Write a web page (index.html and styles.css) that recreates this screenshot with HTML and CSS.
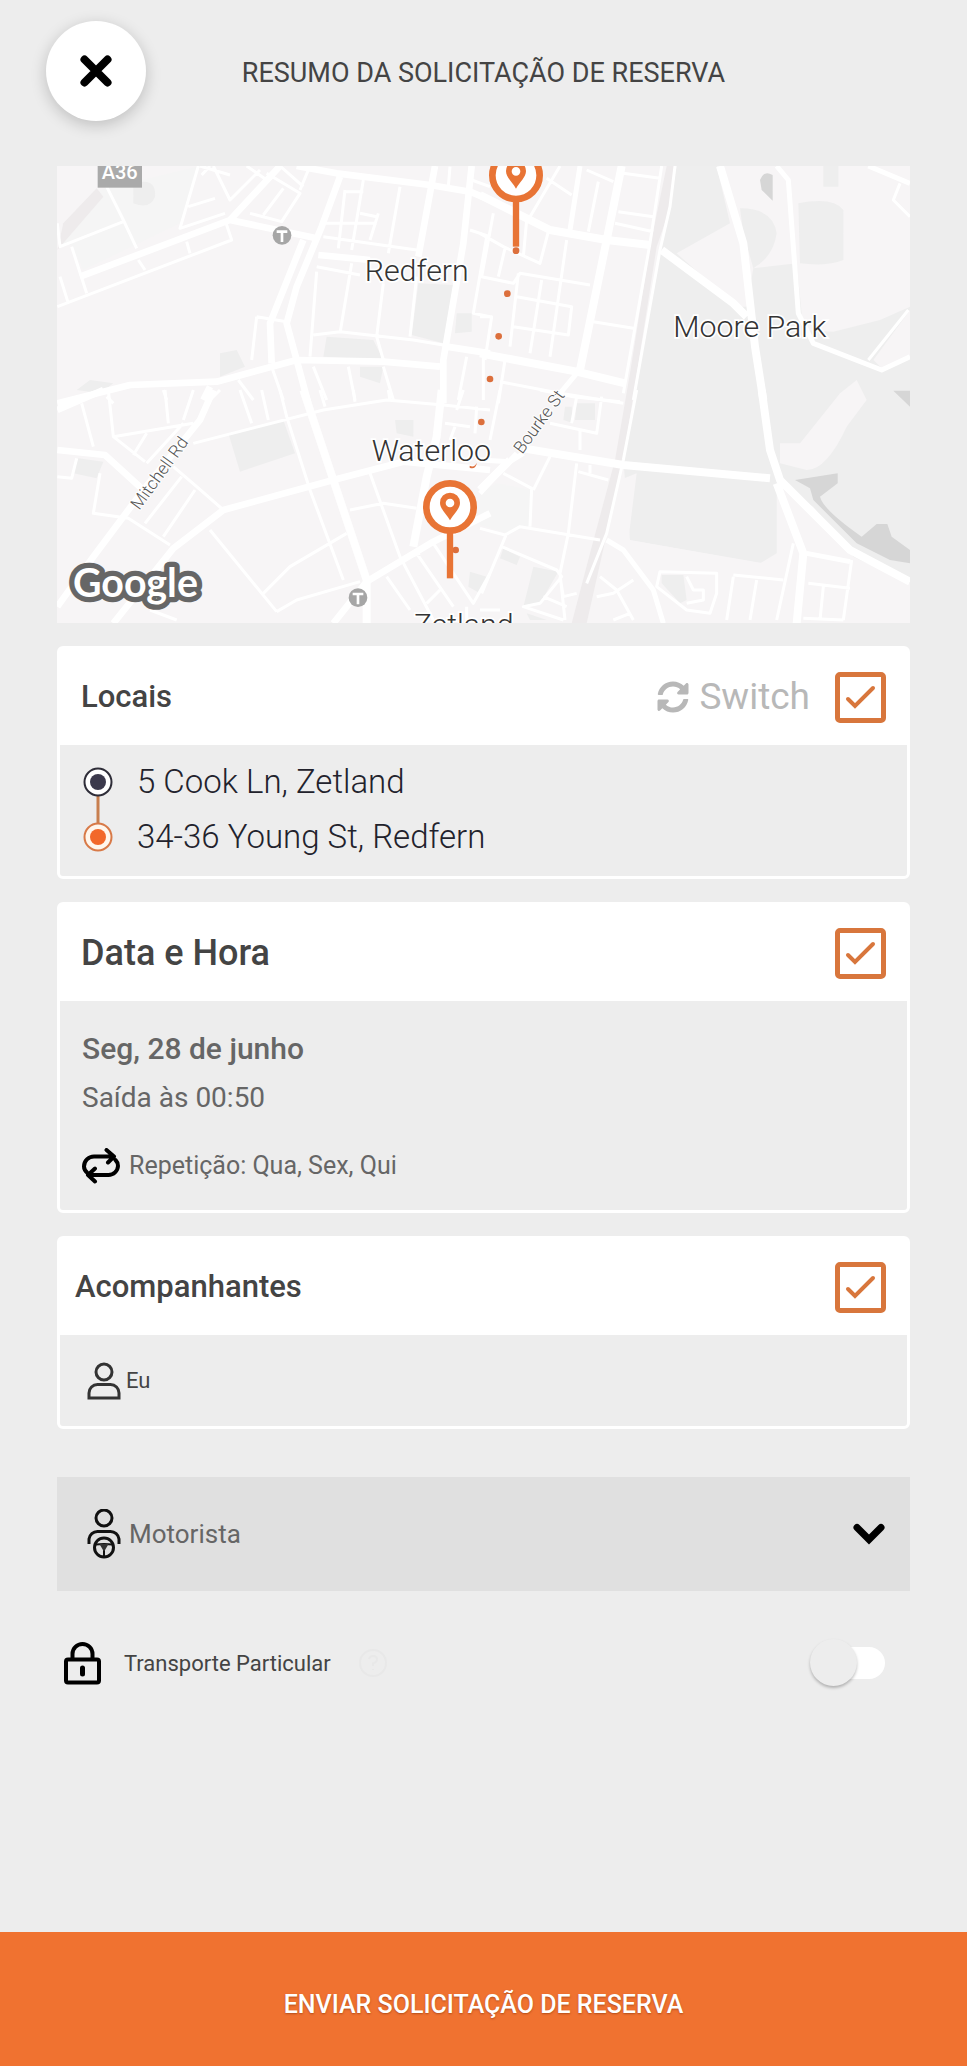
FILE: index.html
```html
<!DOCTYPE html>
<html lang="pt-BR">
<head>
<meta charset="utf-8">
<meta name="viewport" content="width=device-width, initial-scale=1">
<title>Resumo da solicitação de reserva</title>
<link rel="stylesheet" href="styles.css">
</head>
<body class="page">
<header class="topbar">
  <button class="close" type="button" aria-label="Fechar">
    <svg width="32" height="32" viewBox="0 0 32 32"><path d="M4.500 4.500L27.500 27.500M27.500 4.500L4.500 27.500"/></svg>
  </button>
  <h1 class="topbar-title">RESUMO DA SOLICITAÇÃO DE RESERVA</h1>
</header>

<main class="content">
  <svg class="map" viewBox="0 0 2559 1371" role="img" aria-label="Mapa do trajeto entre Zetland e Redfern">
    <rect class="land" width="2559" height="1371"/>
    <!-- Parks and water -->
    <g transform="translate(-21 -18)">
      <path class="green" d="M150 90L450 18L390 190L100 330L65 255L40 250Z"/>
      <path class="park" d="M1105 370L1210 375L1180 550L1085 525ZM830 530L970 540L1000 600L820 590ZM510 580L560 570L585 620L510 650ZM80 690L120 660L190 670L150 700ZM1220 460H1265V515L1215 520ZM930 620H1000L990 670L930 650ZM250 70Q320 50 315 110Q300 150 250 130Z"/>
      <path class="rail" d="M140 85L40 190L22 270L160 110Z"/>
    </g>
    <g transform="translate(1269 -18)">
      <path class="park" d="M590 18H1290V1390H1100L890 930L890 1180L840 1210L450 1140L430 900L460 720L540 280Z"/>
      <path class="land" d="M710 18H1290V440L1200 480L1060 515L970 510L950 310L820 325L800 440L770 440L590 280L750 190Z"/>
      <path class="park" d="M780 145Q880 145 890 220Q880 290 820 325L790 220ZM955 130Q1060 110 1090 150V300Q1040 320 960 310ZM1030 18H1075V80H1030Z"/>
      <path class="land" d="M1290 450L1180 600L1210 630L1290 590ZM1130 660L1160 720L1100 800Q1040 930 980 930L900 910V850H960L1080 700ZM900 980L1000 1040L1120 1190L1290 1270V1390H950Z"/>
      <path class="water" d="M840 60Q850 30 878 45V122L845 90ZM1240 692H1290V740ZM945 960L1073 940V970L1020 1010Q1030 1050 1145 1130L1190 1092H1222L1235 1130L1290 1170V1210L1230 1200L1130 1150L1000 1020L990 985Z"/>
      <path class="rail" d="M560 18H588L575 130L530 260L430 900L320 1390H275L330 1180L405 900L450 640L510 260Z"/>
    </g>
    <g transform="translate(-21 672)">
      <path class="park" d="M535 130L700 90L735 190L570 245ZM85 205L160 215L140 265L70 250ZM1035 90H1090V140L1040 130ZM1260 545L1310 560L1290 610L1255 590Z"/>
    </g>
    <g transform="translate(1269 672)">
      <path class="land" d="M420 270L470 250L445 450L850 520L930 470L960 690H380V450Z"/>
      <path class="park" d="M255 50L275 50L280 100L250 90ZM290 40H345V90H285ZM70 475L120 500L110 525L60 505ZM160 530L235 545L180 640L130 650ZM545 555H610L620 630L600 640L545 580ZM140 670L200 690H150Z"/>
      <path class="green" d="M0 310L50 280L155 300L150 410L80 430L0 405Z"/>
    </g>
    <!-- Streets, north-west -->
    <g class="street" transform="translate(-21 -18)">
      <path class="w8" d="M22 190L30 260L220 185M65 260L110 400M30 350L55 430M22 440L440 280L545 240L525 180M170 80L220 180L260 265M410 245L420 280M265 300L285 330M445 18L390 205L525 160M415 140L495 115M455 45L480 18M490 18L540 120L630 30M450 18L540 45M590 18L650 60M690 18L760 80M650 40L750 100L695 185L600 160M700 85L640 165M780 18L750 90M820 190H980M885 95L940 95M885 90L865 265M940 60L905 270M985 160L960 240M930 160L980 170M1050 80L1015 280M820 230L1100 270M800 320L930 345M800 335L780 590M905 310L870 520M1000 370L980 530L1000 600M1100 350L1080 530M620 470L605 600M620 470L710 485M790 525L870 515L1090 540L1180 555M565 660L610 720M665 620L700 720M790 620L830 720M895 620L915 720M1000 620L1030 720M1250 590L1225 720M1300 590V720M1260 210L1320 230M1265 60L1320 80M1200 20L1195 80M1310 230L1270 460L1320 470M340 690L350 720M170 710L190 730"/>
      <path class="w18" d="M90 350L540 180L690 18M540 180L800 235M740 18L860 40L1140 75L1260 95L1320 120M22 730L240 675L500 665L740 600L1000 605L1170 620"/>
      <path class="w18" d="M870 50L815 200L740 380L710 490L740 600L775 730M760 240L660 490L665 610M805 285L960 300M1155 18L1105 290M1265 18L1240 250L1180 600V730M1190 560L1320 580M480 680L460 720"/>
    </g>
    <!-- Streets, north-east -->
    <g class="street" transform="translate(1269 -18)">
      <path class="w8" d="M0 220L70 260L180 310L205 215M40 160L5 350L100 370L120 340L330 375M115 340L90 560M110 410L275 440L265 525L100 500M185 360L150 580M260 240L210 590M0 470L35 470L15 600M75 265L55 350M75 600L55 730M60 665L240 700L430 730M200 55L275 105M240 18L150 170M355 65L325 215M320 30L400 65M430 40L540 55M415 155L520 170M405 190L520 215M340 485L460 505M545 18L510 250L430 700M585 18L570 140L540 270L460 720M1285 450L1165 600M1290 170L1240 120L1260 70M140 180L130 290"/>
      <path class="w14" d="M890 18L925 60L955 460L1000 550L1205 630L1290 590M1165 18L1290 70M300 18L270 210M290 640L240 700"/>
      <path class="w22" d="M0 105L210 210L380 240L510 255M425 18L380 240L300 630M0 580L290 635L435 670M545 270L760 430L800 470M720 18L790 250L825 560L850 720"/>
    </g>
    <!-- Streets, south-west -->
    <g class="street" transform="translate(-21 672)">
      <path class="w8" d="M95 40L130 170M175 0L190 140L285 215M190 140L430 100M345 0L355 100M430 0L400 90M400 100L290 220M290 130L250 195M22 260L65 265L80 205M150 250L130 370L235 385L360 465M395 260L285 400M435 300L340 440M370 230L440 290L520 360M480 420L680 665M570 0L605 100M635 0L655 90M690 0L710 80L780 300L880 570M430 160L820 60L1010 30L1180 45L1320 60M810 0L825 50M910 0L915 35M1015 0L1020 30M640 610L720 530L890 430M680 665L740 630L930 575M960 250L1050 500L1150 690M900 360L1000 340L1100 355M1010 560L1080 660M1100 490L1210 650M1050 510L1110 490M1150 460L1270 640L1320 550M1130 640L1170 600M1240 0L1220 60M1280 50L1275 130M1185 100L1260 110M1215 110L1200 150M300 660L380 690M510 0L480 30M1250 650V690"/>
      <path class="w18" d="M22 60L160 0M22 180L165 195L280 300M490 0L450 90L280 300L130 500L22 650M190 700L370 475L520 360L850 270L1060 215L1320 240M1320 370L1150 455L950 575L850 700"/>
      <path class="w22" d="M760 0L850 270L950 570V700M1175 0L1160 140L1130 260L1090 470"/>
    </g>
    <!-- Streets, south-east -->
    <g class="street" transform="translate(1269 672)">
      <path class="w8" d="M60 0L30 150M210 100L350 130L365 20M290 20L275 100M180 0L280 20L420 35M300 120V180M70 250L155 295L150 410M210 200L160 300M290 220L265 430L240 550L255 690M295 245L385 270M330 225V250M0 415L75 435L120 410L360 450M80 430L5 610M65 470L230 540L245 560L180 640L130 650L250 690M240 560L250 620L290 610M190 620L260 650M0 660H60M470 0L430 210L380 430L320 580M360 560L410 600L460 690M350 620L400 610L460 570M400 690L450 670M540 545L710 550V610L690 670L620 660L530 590ZM620 560L640 600H670V630L620 640M760 560L740 690M760 555L910 570M830 570L810 690M940 460L890 690M985 580L1110 595M1115 510L1090 690M1030 590L1020 690M970 685L1090 690"/>
      <path class="w14" d="M0 210L90 215L130 190M110 190L0 310M980 490L1110 515M380 450L430 480L520 600L550 700"/>
      <path class="w22" d="M130 175L430 225L870 265M845 0L870 180L900 270L1110 480L1290 575M890 280L970 490L950 700M0 300L90 210"/>
    </g>
    <!-- Transit stops and road shield -->
    <rect class="shield" x="122" y="0" width="133" height="65"/>
    <text class="shield-label" x="188" y="39">A36</text>
    <g class="stop">
      <circle cx="675" cy="208" r="28"/><path d="M659 197H691M675 197V228"/>
      <circle cx="903" cy="1295" r="28"/><path d="M887 1284H919M903 1284V1315"/>
    </g>
    <!-- Place and street names -->
    <g class="place">
      <text x="923" y="345">Redfern</text>
      <text x="1849" y="514">Moore Park</text>
      <text x="944" y="886">Waterloo</text>
      <text x="1070" y="1408">Zetland</text>
    </g>
    <g class="road-name">
      <text transform="translate(247 1034) rotate(-54)">Mitchell Rd</text>
      <text transform="translate(1396 866) rotate(-54)">Bourke St</text>
    </g>
    <!-- Route and pins -->
    <g class="route">
      <circle cx="1377" cy="254" r="10"/><circle cx="1351" cy="383" r="10"/><circle cx="1325" cy="511" r="10"/>
      <circle cx="1299" cy="639" r="10"/><circle cx="1273" cy="768" r="10"/><path d="M1238 899Q1252 906 1260 890Q1255 912 1238 905Z"/><circle cx="1196" cy="1152" r="10"/>
    </g>
    <g id="pin" transform="translate(1179 1023)">
      <path class="pin-stem" d="M0 75V214"/>
      <circle class="pin-ring" r="71"/>
      <path class="pin-mark" fill-rule="evenodd" d="M0 40C-11 20-30 6-30-13A30 30 0 0 1 30-13C30 6 11 20 0 40ZM0-25A13 13 0 1 0 0 1A13 13 0 1 0 0-25Z"/>
    </g>
    <use href="#pin" x="198" y="-995"/>
    <text class="google google-edge" x="48" y="1292">Google</text>
    <text class="google" x="48" y="1292">Google</text>
  </svg>

  <section class="card">
    <div class="card-head">
      <h2 class="card-title"><label for="ok-places">Locais</label></h2>
      <button class="switch-btn" type="button">
        <svg width="32" height="32" viewBox="0 0 512 512"><path d="M370.720 133.280C339.458 104.008 298.888 87.962 255.848 88c-77.458.068-144.328 53.178-162.791 126.850-1.344 5.363-6.122 9.150-11.651 9.150H24.103c-7.498 0-13.194-6.807-11.807-14.176C33.933 94.924 134.813 8 256 8c66.448 0 126.791 26.136 171.315 68.685L463.030 40.970C478.149 25.851 504 36.559 504 57.941V192c0 13.255-10.745 24-24 24H345.941c-21.382 0-32.090-25.851-16.971-40.971l41.750-41.749zM32 296h134.059c21.382 0 32.090 25.851 16.971 40.971l-41.750 41.750c31.262 29.273 71.835 45.319 114.876 45.280 77.418-.070 144.315-53.144 162.787-126.849 1.344-5.363 6.122-9.150 11.651-9.150h57.304c7.498 0 13.194 6.807 11.807 14.176C478.067 417.076 377.187 504 256 504c-66.448 0-126.791-26.136-171.315-68.685L48.970 471.030C33.851 486.149 8 475.441 8 454.059V320c0-13.255 10.745-24 24-24z"/></svg>
        Switch
      </button>
      <span class="check"><input type="checkbox" id="ok-places" checked><svg viewBox="0 0 51 51"><path d="M13 27L20 34L38 16"/></svg></span>
    </div>
    <div class="card-body places">
      <svg class="places-line" width="30" height="86" viewBox="0 0 30 86">
        <path d="M15 29V58" stroke="#c87f4f" stroke-width="3"/>
        <circle cx="15" cy="15" r="13.500" fill="#fff" stroke="#2e2d38" stroke-width="2"/><circle cx="15" cy="15" r="8" fill="#3b394c"/>
        <circle cx="15" cy="70" r="13.500" fill="#fff6ec" stroke="#d87a48" stroke-width="2"/><circle cx="15" cy="70" r="8" fill="#f2682a"/>
      </svg>
      <ul class="places-list">
        <li>5 Cook Ln, Zetland</li>
        <li>34-36 Young St, Redfern</li>
      </ul>
    </div>
  </section>

  <section class="card">
    <div class="card-head">
      <h2 class="card-title card-title-large"><label for="ok-date">Data e Hora</label></h2>
      <span class="check"><input type="checkbox" id="ok-date" checked><svg viewBox="0 0 51 51"><path d="M13 27L20 34L38 16"/></svg></span>
    </div>
    <div class="card-body date">
      <p class="date-day">Seg, 28 de junho</p>
      <p class="date-time">Saída às 00:50</p>
      <p class="date-repeat">
        <svg width="38" height="36" viewBox="0 0 38 36"><path d="M5.500 25Q2 22 2 18.500A10 10 0 0 1 12 8.500H32M24.500 2L32 8.500L26 14.500M33.500 12Q36 14.500 36 18A9.500 9.500 0 0 1 26.500 27H6M13 20.500L6 27L13 33.500"/></svg>
        Repetição: Qua, Sex, Qui
      </p>
    </div>
  </section>

  <section class="card">
    <div class="card-head card-head-wide">
      <h2 class="card-title"><label for="ok-people">Acompanhantes</label></h2>
      <span class="check"><input type="checkbox" id="ok-people" checked><svg viewBox="0 0 51 51"><path d="M13 27L20 34L38 16"/></svg></span>
    </div>
    <div class="card-body people">
      <svg width="34" height="38" viewBox="0 0 34 38"><circle cx="17" cy="10" r="8"/><path d="M2 36V31A8.500 8.500 0 0 1 10.500 22.500H23.500A8.500 8.500 0 0 1 32 31V36Z"/></svg>
      Eu
    </div>
  </section>

  <div class="driver">
    <select class="driver-select" aria-label="Motorista"><option>Motorista</option></select>
    <svg class="driver-icon" width="34" height="50" viewBox="0 0 34 50"><circle cx="17" cy="9" r="8"/><path d="M2 35V30A8.500 8.500 0 0 1 10.500 22.500H23.500A8.500 8.500 0 0 1 32 30V35"/><circle class="wheel" cx="17" cy="38.500" r="9.500"/><path class="spokes" d="M8.500 35.500Q17 34.500 25.500 35.500M17 38V47"/><path class="solid" d="M12.500 35H21.500L17.500 42H16.500Z"/></svg>
    <svg class="driver-arrow" width="32" height="22" viewBox="0 0 32 22"><path d="M4 4.500L16 16.500L28 4.500"/></svg>
  </div>

  <div class="private">
    <svg class="lock" width="38" height="44" viewBox="0 0 38 44"><path d="M9.500 19V13A10 10 0 0 1 29.500 13V19"/><rect x="3" y="18.500" width="33" height="23" rx="2"/><path class="keyhole" d="M19.500 27V33"/></svg>
    <label class="private-label" for="private">Transporte Particular</label>
    <button class="help" type="button" aria-label="Ajuda"><svg width="28" height="28" viewBox="0 0 28 28"><circle cx="14" cy="14" r="13"/><path d="M10 10Q11 7 14 7Q18 7 18 10.500Q18 13 14 14.500V17M14 20V21"/></svg></button>
    <input class="toggle" type="checkbox" role="switch" id="private">
  </div>
</main>

<button class="submit" type="button">ENVIAR SOLICITAÇÃO DE RESERVA</button>
</body>
</html>
```
FILE: styles.css
```css
*, *::before { box-sizing: border-box; }

.page {
  margin: 0;
  min-height: 100vh;
  display: flex;
  flex-direction: column;
  background: #ededed;
  color: #444;
  font-family: Roboto, "Liberation Sans", sans-serif;
}

button, select { font: inherit; color: inherit; border: 0; background: none; padding: 0; }
h1, h2, p, ul { margin: 0; padding: 0; font-weight: 500; }

/* Top bar */
.topbar {
  display: grid;
  grid-template-columns: 100px 1fr 100px;
  align-items: center;
  padding: 21px 46px 45px;
}
.close {
  width: 100px;
  height: 100px;
  border-radius: 50%;
  background: #fff;
  box-shadow: 0 4px 16px rgba(0, 0, 0, .2);
  display: grid;
  place-items: center;
}
.close path { stroke: #000; stroke-width: 8; stroke-linecap: round; }
.topbar-title { padding-top: 4px; font-size: 27px; line-height: 32px; font-weight: 400; text-align: center; }

.content { display: flex; flex-direction: column; gap: 23px; padding: 0 57px; }

/* Map */
.map { display: block; width: 100%; height: auto; }
.land { fill: #f7f5f6; }
.green { fill: #f5f5f5; }
.park { fill: #eee; }
.water { fill: #d6d6d6; }
.rail { fill: #eeebec; }
.street path { fill: none; stroke: #fff; stroke-linejoin: round; }
.street .w8 { stroke-width: 9; }
.street .w14 { stroke-width: 15; }
.street .w18 { stroke-width: 20; }
.street .w22 { stroke-width: 24; }
.shield { fill: #aaa; }
.shield-label { fill: #fff; font-size: 60px; font-weight: 500; text-anchor: middle; }
.stop circle { fill: #a6a6a6; }
.stop path { stroke: #fff; stroke-width: 8; }
.place { fill: #333; font-size: 91px; font-weight: 300; stroke: #fff; stroke-width: 10; paint-order: stroke; }
.road-name { fill: #555; font-size: 52px; font-weight: 300; stroke: #fff; stroke-width: 6; paint-order: stroke; }
.route { fill: #dc6f3c; }
.pin-stem { stroke: #e87435; stroke-width: 19; }
.pin-ring { fill: #fff; stroke: #e87435; stroke-width: 20; }
.pin-mark { fill: #e87435; }
.google { font-family: Lato, sans-serif; font-size: 118px; font-weight: 700; fill: #fff; }
.google-edge { stroke: #666; stroke-width: 32; stroke-linejoin: round; }

/* Cards */
.card { border: 3px solid #fff; border-radius: 6px; }
.card-head {
  display: flex;
  align-items: center;
  min-height: 96px;
  padding: 0 21px;
  background: #fff;
}
.card-head-wide { padding-left: 15px; }
.card-title { flex: 1; font-size: 31px; line-height: 40px; }
.card-title-large { font-size: 36px; }
.switch-btn { display: flex; align-items: center; gap: 10px; margin-right: 25px; color: #b8b8b8; font-size: 37px; line-height: 40px; }
.switch-btn svg { fill: #b8b8b8; }
.check { display: grid; width: 51px; height: 51px; }
.check > * { grid-area: 1 / 1; width: 51px; height: 51px; margin: 0; }
.check input { appearance: none; border: 5px solid #d8763c; border-radius: 5px; }
.check svg { pointer-events: none; }
.check path { fill: none; stroke: #d8763c; stroke-width: 4; stroke-linecap: round; }

.places { display: flex; gap: 24px; padding: 22px 23px 23px; }
.places-line { flex: none; }
.places-list { list-style: none; color: #22222c; font-size: 33px; line-height: 55px; margin: -13px 0 -12px; }
.places-list li { font-weight: 300; }

.date { padding: 28px 22px 24px; color: #666; }
.date-day { font-size: 30px; line-height: 40px; }
.date-time { font-size: 28px; line-height: 40px; margin-top: 9px; font-weight: 400; }
.date-repeat { display: flex; align-items: center; gap: 9px; margin-top: 28px; font-size: 25px; line-height: 40px; font-weight: 400; }
.date-repeat svg { fill: none; stroke: #000; stroke-width: 4; stroke-linecap: round; stroke-linejoin: round; }

.people { display: flex; align-items: center; gap: 5px; min-height: 91px; padding: 0 27px; font-size: 22px; }
.people svg { fill: none; stroke: #333; stroke-width: 3; }

/* Driver */
.driver { display: grid; grid-template-columns: 1fr; align-items: center; margin-top: 25px; background: #e0e0e0; }
.driver > * { grid-area: 1 / 1; }
.driver-icon { margin-left: 30px; fill: none; stroke: #111; stroke-width: 3; pointer-events: none; }
.driver-icon .wheel { fill: #e0e0e0; }
.driver-icon .spokes { stroke-width: 2; }
.driver-icon .solid { fill: #333; stroke: none; }
.driver-select { appearance: none; width: 100%; height: 114px; padding: 0 72px; color: #666; font-size: 26px; }
.driver-arrow { justify-self: end; margin-right: 25px; fill: none; stroke: #000; stroke-width: 7; stroke-linecap: round; pointer-events: none; }

/* Private ride */
.private { display: flex; align-items: center; padding: 27px 25px 25px 6px; }
.lock { fill: none; stroke: #000; stroke-width: 4; }
.lock .keyhole { stroke-width: 5; stroke-linecap: round; }
.private-label { margin-left: 23px; font-size: 22px; }
.help { display: grid; margin-left: 28px; }
.help svg { fill: none; stroke: #e8e8e8; stroke-width: 2; }
.toggle { appearance: none; width: 62px; height: 32px; margin: 0 0 0 auto; border-radius: 16px; background: #fff; }
.toggle::before {
  content: "";
  display: block;
  width: 47px;
  height: 47px;
  margin: -8px 0 0 -13px;
  border-radius: 50%;
  background: #ededed;
  box-shadow: 0 2px 3px rgba(0, 0, 0, .25);
}

/* Submit */
.submit {
  margin-top: auto;
  min-height: 134px;
  padding-top: 10px;
  background: #f07230;
  color: #fff;
  font-size: 25px;
  font-weight: 500;
  text-shadow: 0 1px 2px rgba(120, 40, 0, .5);
}
```
